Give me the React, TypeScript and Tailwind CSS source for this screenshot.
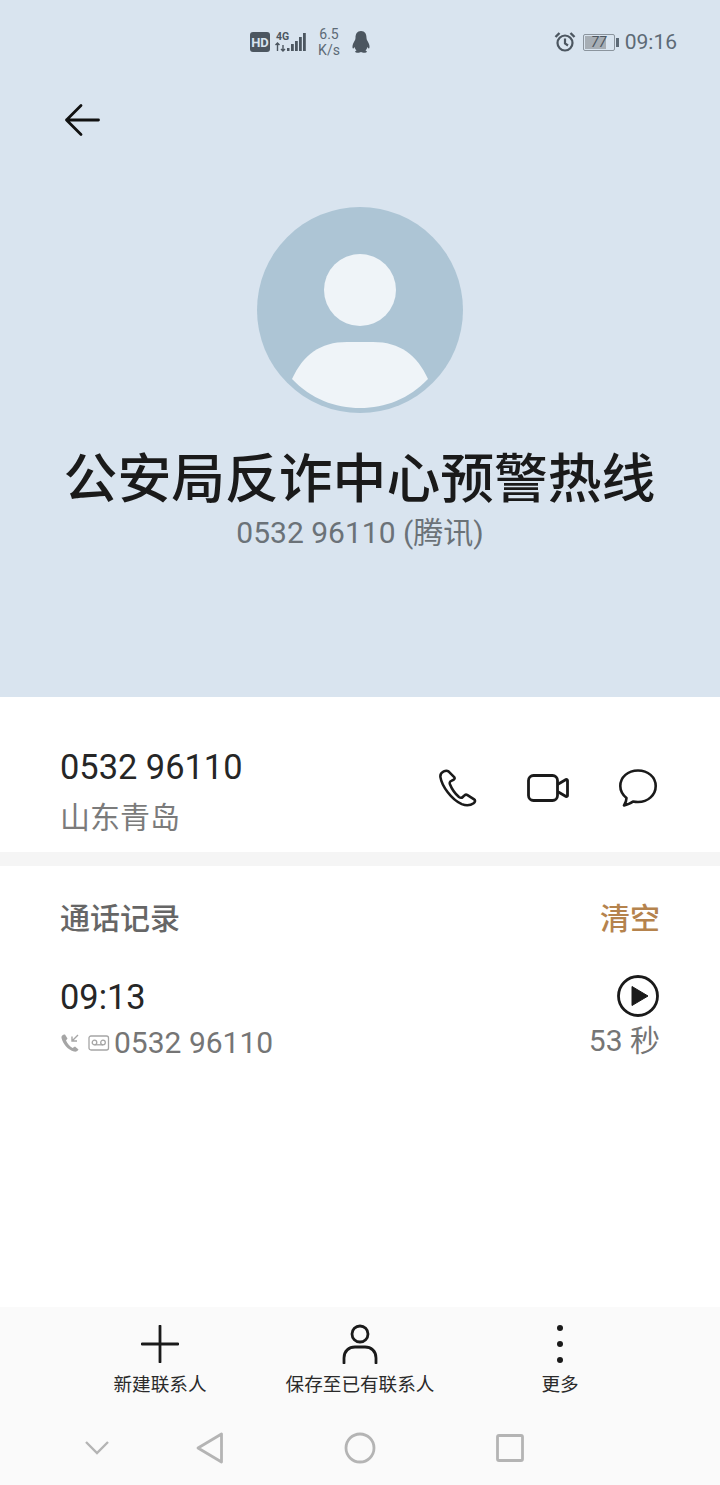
import { ReactNode } from "react";

const FONT = "font-['Roboto','Noto_Sans_CJK_SC',sans-serif]";

function StatusBar() {
  return (
    <div className="h-[84px] flex items-center pl-[250px] pr-[43px] text-[#5d6a76]">
      <svg width="20" height="20" viewBox="0 0 20 20">
        <rect width="20" height="20" rx="3" fill="#4c5660" />
        <text x="10" y="15" fontSize="13" fontWeight="700" fill="#d9e4ef" textAnchor="middle" fontFamily="Roboto">HD</text>
      </svg>
      <svg width="33" height="22" viewBox="0 0 33 22" className="ml-[5px]" fill="#4c5660">
        <text x="1" y="9" fontSize="10.500" fontWeight="700" fontFamily="Roboto">4G</text>
        <path d="M2.500 12v8M0.500 14l2-2 2 2M8 20v-6M6 18l2 2 2-2" stroke="#4c5660" strokeWidth="1.400" fill="none" />
        <rect x="12" y="17" width="2.500" height="3" />
        <rect x="16" y="13" width="2.800" height="7" />
        <rect x="20" y="10" width="2.800" height="10" />
        <rect x="24" y="6" width="2.800" height="14" />
        <rect x="28" y="2" width="2.800" height="18" />
      </svg>
      <div className={`ml-[8px] w-[26px] text-center text-[14px] leading-[16px] ${FONT}`}>
        <div>6.5</div>
        <div>K/s</div>
      </div>
      <svg width="20" height="24" viewBox="0 0 20 24" className="ml-[9px]" fill="#4c5660">
        <path d="M10 1C6 1 4.500 4 4.500 8 4.500 10 3 11.500 2 14 1 17 1.500 19 2.500 18.500L3.500 17C4 18.500 4.500 19.500 5.500 20.500 4 21 3.500 22 5 22.500 7 23 9 22.500 10 22 11 22.500 13 23 15 22.500 16.500 22 16 21 14.500 20.500 15.500 19.500 16 18.500 16.500 17L17.500 18.500C18.500 19 19 17 18 14 17 11.500 15.500 10 15.500 8 15.500 4 14 1 10 1Z" />
      </svg>
      <div className="flex-1" />
      <svg width="22" height="22" viewBox="0 0 22 22" fill="none" stroke="#4c5660" strokeWidth="2.200">
        <circle cx="11" cy="12" r="7.500" />
        <path d="M11 7.500V12.500L14 14.500" />
        <path d="M1.500 6L5.500 2M20.500 6L16.500 2" strokeWidth="2.400" />
      </svg>
      <div className="ml-[7px] flex items-center">
        <div className="relative flex h-[17px] w-[32px] items-center rounded-[2px] border border-[#8b949d] p-[1px]">
          <div className="h-full w-[77%] bg-[#a7aeb5]" />
          <span className={`absolute inset-0 text-center text-[14px] leading-[15px] italic text-[#4c5660] ${FONT}`}>77</span>
        </div>
        <div className="ml-[1px] h-[9px] w-[3px] bg-[#5d6a76]" />
      </div>
      <span className={`ml-[6px] text-[21px] leading-none pt-[1px] ${FONT}`}>09:16</span>
    </div>
  );
}

function Header() {
  return (
    <header className="h-[697px] bg-[#d9e4ef] flex flex-col">
      <StatusBar />
      <div className="pl-[64px] pt-[18px]">
        <svg width="36" height="36" viewBox="0 0 36 36" fill="none" stroke="#111" strokeWidth="2.800" strokeLinecap="round" strokeLinejoin="round">
          <path d="M2.500 18H34.500M17 3.500L2.500 18L17 32.500" />
        </svg>
      </div>
      <div className="mt-[69px] flex justify-center">
        <svg width="206" height="206" viewBox="0 0 206 206">
          <circle cx="103" cy="103" r="103" fill="#adc5d5" />
          <circle cx="103" cy="83" r="36" fill="#eff4f8" />
          <path d="M35 172C46 148 63 135 90 135H116C143 135 160 148 171 172C152 192 128 201 103 201C78 201 54 192 35 172Z" fill="#eff4f8" />
        </svg>
      </div>
      <h1 className={`mt-[35px] -ml-[1px] text-center text-[53.800px] leading-[64px] font-medium whitespace-nowrap text-[#1a1a1a] ${FONT}`}>
        公安局反诈中心预警热线
      </h1>
      <p className={`mt-[1px] text-center text-[30px] leading-[40px] text-[#6b7278] ${FONT}`}>
        0532 96110 (腾讯)
      </p>
    </header>
  );
}

function ContactRow() {
  return (
    <section className="h-[155px] bg-white flex items-start pl-[60px] pr-[63px]">
      <div className="flex-1 pt-[46px]">
        <div className={`text-[34.400px] leading-[48px] text-[#262626] ${FONT}`}>0532 96110</div>
        <div className={`mt-[6px] text-[30px] leading-[42px] text-[#7b7b7b] ${FONT}`}>山东青岛</div>
      </div>
      <div className="flex items-center gap-[50px] pt-[72px]">
        <svg width="38" height="38" viewBox="0 0 40 40" fill="none" stroke="#1a1a1a" strokeWidth="2.700" strokeLinejoin="round" strokeLinecap="round">
          <path d="M5 2.500C3 3.500 1 5 1.500 8.500C3 18 13 32 24 37C28 38.500 33 38.500 36.500 36C38 35 38.500 33 37 32L30 27.500C28.500 26.500 27.500 26.800 26.500 28L25 29.500C24 30.500 22.500 30.500 21 29.500C17 26 13.500 21 11.500 16C11 14.500 11.500 13 13 12.500L15 11.500C16.500 11 16.800 9.500 16 8.500L10 2.500C8.500 1.500 6.500 1.800 5 2.500Z" />
        </svg>
        <svg width="42" height="28" viewBox="0 0 42 28" fill="none" stroke="#1a1a1a" strokeWidth="2.800" strokeLinejoin="round">
          <rect x="1.500" y="1.500" width="29" height="25" rx="5" />
          <path d="M30.500 10.500L39 5.500C39.800 5.200 40.500 5.800 40.500 6.500V21.500C40.500 22.200 39.800 22.800 39 22.500L30.500 17.500" />
        </svg>
        <svg width="38" height="38" viewBox="0 0 38 38" fill="none" stroke="#1a1a1a" strokeWidth="2.600" strokeLinejoin="round">
          <path d="M19 1.500C9 1.500 1.300 8 1.300 17C1.300 22 3.800 26 7.500 29C7.500 31.500 6.500 34 5 36.500C8.500 35.500 11.500 34.500 14 32.500C15.500 32.800 17.300 33 19 33C29 33 36.700 26 36.700 17C36.700 8 29 1.500 19 1.500Z" />
        </svg>
      </div>
    </section>
  );
}

function CallRecords() {
  return (
    <section className="flex-1 bg-white pl-[60px] pr-[60px]">
      <div className="flex justify-between pt-[32px]">
        <span className={`text-[30px] leading-[42px] font-medium text-[#666] ${FONT}`}>通话记录</span>
        <span className={`text-[30px] leading-[42px] font-medium text-[#b5834d] ${FONT}`}>清空</span>
      </div>
      <div className="mt-[33px] flex items-start justify-between">
        <div>
          <div className={`text-[34.400px] leading-[48px] text-[#262626] ${FONT}`}>09:13</div>
          <div className="mt-[1px] flex items-center">
            <svg width="20" height="20" viewBox="0 0 20 20" fill="none" className="shrink-0">
              <path d="M4 1.500C2.500 2 1 3 1.500 5C3 11 8 17 14 18.500C16 19 18 18 18.500 16.500L15 13.500L12.500 15C9.500 13 7.500 10.500 6 7.500L7.500 5.500L5 1.500Z" fill="#a5a5a5" />
              <path d="M18 2L12 8M12 3.500V8H17" stroke="#a5a5a5" strokeWidth="1.400" />
            </svg>
            <svg width="22" height="16" viewBox="0 0 22 16" fill="none" stroke="#a5a5a5" strokeWidth="1.300" className="ml-[8px] shrink-0">
              <rect x="1" y="1" width="19.500" height="14" rx="2" />
              <circle cx="6.500" cy="7.500" r="2.300" />
              <circle cx="15" cy="7.500" r="2.300" />
              <path d="M6.500 9.800H15" />
            </svg>
            <span className={`ml-[4px] text-[30px] leading-[42px] text-[#757575] ${FONT}`}>0532 96110</span>
          </div>
        </div>
        <div className="flex flex-col items-end">
          <svg width="42" height="42" viewBox="0 0 42 42" className="mt-[2px] mr-[1px]">
            <circle cx="21" cy="21" r="19.500" fill="none" stroke="#1a1a1a" strokeWidth="2.800" />
            <path d="M15 11.500L31 21L15 30.500Z" fill="#1a1a1a" stroke="#1a1a1a" strokeWidth="1" strokeLinejoin="round" />
          </svg>
          <span className={`mt-[3px] text-[30px] leading-[42px] text-[#757575] ${FONT}`}>53 秒</span>
        </div>
      </div>
    </section>
  );
}

function BarAction({ icon, label }: { icon: ReactNode; label: string }) {
  return (
    <div className="flex w-[200px] flex-col items-center">
      <div className="flex h-[40px] items-center justify-center">{icon}</div>
      <span className={`mt-[8px] text-[18.600px] leading-[26px] whitespace-nowrap text-[#2a2a2a] ${FONT}`}>{label}</span>
    </div>
  );
}

function BottomBar() {
  return (
    <footer className="h-[178px] bg-[#fafafa]">
      <div className="flex justify-center pt-[17px]">
        <BarAction
          label="新建联系人"
          icon={
            <svg width="38" height="38" viewBox="0 0 38 38" stroke="#1a1a1a" strokeWidth="2.800" strokeLinecap="round">
              <path d="M19 1V37M1 19H37" />
            </svg>
          }
        />
        <BarAction
          label="保存至已有联系人"
          icon={
            <svg width="36" height="40" viewBox="0 0 36 40" fill="none" stroke="#1a1a1a" strokeWidth="2.800" strokeLinecap="round">
              <circle cx="18" cy="10" r="8" />
              <path d="M2 39V34C2 27 7 23 13 23H23C29 23 34 27 34 34V39" />
            </svg>
          }
        />
        <BarAction
          label="更多"
          icon={
            <svg width="6" height="40" viewBox="0 0 6 40" fill="#1a1a1a">
              <circle cx="3" cy="4" r="3" />
              <circle cx="3" cy="20" r="3" />
              <circle cx="3" cy="36" r="3" />
            </svg>
          }
        />
      </div>
      <nav className="mt-[34px] flex items-center pl-[84px]">
        <svg width="26" height="16" viewBox="0 0 26 16" fill="none" stroke="#b4b4b4" strokeWidth="2.400">
          <path d="M2 2L13 13L24 2" />
        </svg>
        <svg width="28" height="32" viewBox="0 0 28 32" fill="none" stroke="#b4b4b4" strokeWidth="2.800" strokeLinejoin="round" className="ml-[86px]">
          <path d="M25.500 2V30L2 16Z" />
        </svg>
        <svg width="32" height="32" viewBox="0 0 32 32" fill="none" stroke="#b4b4b4" strokeWidth="2.800" className="ml-[120px]">
          <circle cx="16" cy="16" r="14" />
        </svg>
        <svg width="28" height="28" viewBox="0 0 28 28" fill="none" stroke="#b4b4b4" strokeWidth="2.800" strokeLinejoin="round" className="ml-[120px]">
          <rect x="1.500" y="1.500" width="25" height="25" rx="1.500" />
        </svg>
      </nav>
    </footer>
  );
}

export default function App() {
  return (
    <div className="flex h-[1485px] w-[720px] flex-col overflow-hidden bg-white">
      <Header />
      <ContactRow />
      <div className="h-[14px] bg-[#f5f5f5]" />
      <CallRecords />
      <BottomBar />
    </div>
  );
}
